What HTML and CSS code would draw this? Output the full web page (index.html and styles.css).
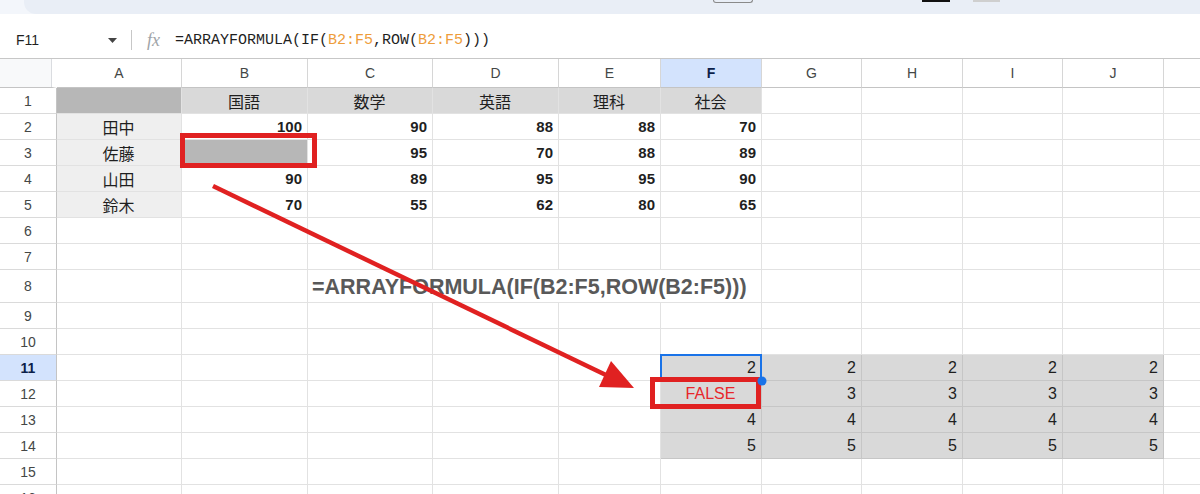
FILE: index.html
```html
<!DOCTYPE html>
<html lang="ja">
<head>
<meta charset="utf-8">
<title>ARRAYFORMULA</title>
<link rel="stylesheet" href="styles.css">
</head>
<body>
<div class="page">
  <div class="topband">
    <div class="pill">
      <div class="tb-outline"></div>
      <div class="tb-black"></div>
      <div class="tb-gray"></div>
    </div>
  </div>
  <div class="fbar">
    <div class="namebox">F11</div>
    <svg class="dd" width="9" height="5" viewBox="0 0 9 5"><path d="M0 0h9L4.5 5z" fill="#444"/></svg>
    <div class="fsep"></div>
    <div class="fx">fx</div>
    <div class="formula">=ARRAYFORMULA(IF(<span class="ref">B2:F5</span>,ROW(<span class="ref">B2:F5</span>)))</div>
  </div>

  <div class="sheet">
    <div class="row hdr">
      <div class="corner"></div>
      <div class="ch">A</div><div class="ch">B</div><div class="ch">C</div><div class="ch">D</div><div class="ch">E</div>
      <div class="ch on">F</div><div class="ch">G</div><div class="ch">H</div><div class="ch">I</div><div class="ch">J</div><div class="ch last"></div>
    </div>

    <div class="row">
      <div class="rh">1</div>
      <div class="c dk"></div>
      <div class="c lt jp">国語</div><div class="c lt jp">数学</div><div class="c lt jp">英語</div><div class="c lt jp">理科</div><div class="c lt jp">社会</div>
      <div class="c"></div><div class="c"></div><div class="c"></div><div class="c"></div><div class="c last"></div>
    </div>
    <div class="row">
      <div class="rh">2</div>
      <div class="c nm jp">田中</div>
      <div class="c n">100</div><div class="c n">90</div><div class="c n">88</div><div class="c n">88</div><div class="c n">70</div>
      <div class="c"></div><div class="c"></div><div class="c"></div><div class="c"></div><div class="c last"></div>
    </div>
    <div class="row">
      <div class="rh">3</div>
      <div class="c nm jp">佐藤</div>
      <div class="c dk"></div><div class="c n">95</div><div class="c n">70</div><div class="c n">88</div><div class="c n">89</div>
      <div class="c"></div><div class="c"></div><div class="c"></div><div class="c"></div><div class="c last"></div>
    </div>
    <div class="row">
      <div class="rh">4</div>
      <div class="c nm jp">山田</div>
      <div class="c n">90</div><div class="c n">89</div><div class="c n">95</div><div class="c n">95</div><div class="c n">90</div>
      <div class="c"></div><div class="c"></div><div class="c"></div><div class="c"></div><div class="c last"></div>
    </div>
    <div class="row">
      <div class="rh">5</div>
      <div class="c nm jp">鈴木</div>
      <div class="c n">70</div><div class="c n">55</div><div class="c n">62</div><div class="c n">80</div><div class="c n">65</div>
      <div class="c"></div><div class="c"></div><div class="c"></div><div class="c"></div><div class="c last"></div>
    </div>
    <div class="row">
      <div class="rh">6</div>
      <div class="c"></div><div class="c"></div><div class="c"></div><div class="c"></div><div class="c"></div><div class="c"></div>
      <div class="c"></div><div class="c"></div><div class="c"></div><div class="c"></div><div class="c last"></div>
    </div>
    <div class="row">
      <div class="rh">7</div>
      <div class="c"></div><div class="c"></div><div class="c"></div><div class="c"></div><div class="c"></div><div class="c"></div>
      <div class="c"></div><div class="c"></div><div class="c"></div><div class="c"></div><div class="c last"></div>
    </div>
    <div class="row tall">
      <div class="rh">8</div>
      <div class="c"></div><div class="c"></div>
      <div class="c big span4">=ARRAYFORMULA(IF(B2:F5,ROW(B2:F5)))</div>
      <div class="c"></div><div class="c"></div><div class="c"></div><div class="c"></div><div class="c last"></div>
    </div>
    <div class="row">
      <div class="rh">9</div>
      <div class="c"></div><div class="c"></div><div class="c"></div><div class="c"></div><div class="c"></div><div class="c"></div>
      <div class="c"></div><div class="c"></div><div class="c"></div><div class="c"></div><div class="c last"></div>
    </div>
    <div class="row">
      <div class="rh">10</div>
      <div class="c"></div><div class="c"></div><div class="c"></div><div class="c"></div><div class="c"></div><div class="c"></div>
      <div class="c"></div><div class="c"></div><div class="c"></div><div class="c"></div><div class="c last"></div>
    </div>
    <div class="row">
      <div class="rh on">11</div>
      <div class="c"></div><div class="c"></div><div class="c"></div><div class="c"></div><div class="c"></div>
      <div class="c r sel">2</div><div class="c r">2</div><div class="c r">2</div><div class="c r">2</div><div class="c r">2</div><div class="c last"></div>
    </div>
    <div class="row">
      <div class="rh">12</div>
      <div class="c"></div><div class="c"></div><div class="c"></div><div class="c"></div><div class="c"></div>
      <div class="c r false">FALSE</div><div class="c r">3</div><div class="c r">3</div><div class="c r">3</div><div class="c r">3</div><div class="c last"></div>
    </div>
    <div class="row">
      <div class="rh">13</div>
      <div class="c"></div><div class="c"></div><div class="c"></div><div class="c"></div><div class="c"></div>
      <div class="c r">4</div><div class="c r">4</div><div class="c r">4</div><div class="c r">4</div><div class="c r">4</div><div class="c last"></div>
    </div>
    <div class="row">
      <div class="rh">14</div>
      <div class="c"></div><div class="c"></div><div class="c"></div><div class="c"></div><div class="c"></div>
      <div class="c r">5</div><div class="c r">5</div><div class="c r">5</div><div class="c r">5</div><div class="c r">5</div><div class="c last"></div>
    </div>
    <div class="row">
      <div class="rh">15</div>
      <div class="c"></div><div class="c"></div><div class="c"></div><div class="c"></div><div class="c"></div><div class="c"></div>
      <div class="c"></div><div class="c"></div><div class="c"></div><div class="c"></div><div class="c last"></div>
    </div>
    <div class="row">
      <div class="rh">16</div>
      <div class="c"></div><div class="c"></div><div class="c"></div><div class="c"></div><div class="c"></div><div class="c"></div>
      <div class="c"></div><div class="c"></div><div class="c"></div><div class="c"></div><div class="c last"></div>
    </div>
  </div>

  <svg class="overlay" width="1200" height="494" viewBox="0 0 1200 494">
    <rect x="182.5" y="135.5" width="132" height="30" fill="none" stroke="#e02121" stroke-width="5"/>
    <rect x="652.5" y="379.5" width="106" height="27" fill="none" stroke="#e02121" stroke-width="5"/>
    <line x1="213" y1="186" x2="608" y2="376" stroke="#e02121" stroke-width="4.5"/>
    <polygon points="634,388 599,387 611,361" fill="#e02121"/>
    <circle cx="762" cy="381" r="4.5" fill="#1a73e8"/>
  </svg>
</div>
</body>
</html>
```

FILE: styles.css
```css
* { box-sizing: border-box; }

html, body {
  margin: 0;
  width: 1200px;
  height: 494px;
  overflow: hidden;
  background: #ffffff;
  font-family: "Liberation Sans", Arial, sans-serif;
  color: #1f1f1f;
}

.page {
  position: relative;
  width: 1200px;
  height: 494px;
  overflow: hidden;
}

/* top toolbar remnant */
.topband {
  height: 14px;
  background: #f3f6fb;
  padding-left: 24px;
  display: flex;
}
.pill {
  flex: 1;
  background: #e9eef6;
  border-bottom-left-radius: 12px;
  display: flex;
  align-items: flex-start;
}
.tb-outline {
  margin-left: 689px;
  width: 40px;
  height: 3px;
  border: 1px solid #8a8a8a;
  border-top: none;
  border-radius: 0 0 5px 5px;
}
.tb-black {
  margin-left: 169px;
  width: 28px;
  height: 2px;
  background: #111;
}
.tb-gray {
  margin-left: 23px;
  width: 27px;
  height: 2px;
  background: #cfcfcf;
}

/* formula bar */
.fbar {
  height: 44px;
  padding-top: 8px;
  display: flex;
  align-items: center;
}
.namebox {
  width: 108px;
  padding-left: 16px;
  font-size: 14px;
  color: #1f1f1f;
}
.dd { margin-right: 14px; }
.fsep {
  width: 1px;
  height: 20px;
  background: #c7c7c7;
  margin-right: 15px;
}
.fx {
  width: 17px;
  margin-right: 11px;
  font-family: "Liberation Serif", serif;
  font-style: italic;
  font-size: 18px;
  color: #a0a4a8;
  line-height: 1;
}
.formula {
  font-family: "Liberation Mono", "DejaVu Sans Mono", monospace;
  font-size: 15px;
  color: #1f1f1f;
}
.ref { color: #ee9d3a; }

/* sheet grid */
.row {
  display: grid;
  grid-template-columns: 57px 125px 126px 125px 126px 102px 101px 100px 101px 100px 101px 36px;
  height: 26px;
}
.row.hdr {
  height: 30px;
  border-top: 1px solid #c7c7c7;
}
.row.tall { height: 33px; }

.corner {
  background: #f8f9fa;
  border-right: 5px solid #ffffff;
  border-bottom: 1px solid #c4c4c4;
  box-shadow: inset -1px 0 0 #dadce0;
}
.ch {
  display: flex;
  align-items: center;
  justify-content: center;
  font-size: 14px;
  color: #444746;
  border-right: 1px solid #d6d6d6;
  border-bottom: 1px solid #c4c4c4;
}
.ch.on, .rh.on {
  background: #d3e3fd;
  color: #0b1f4a;
  font-weight: bold;
}
.ch.last, .c.last { border-right: none; }

.rh {
  display: flex;
  align-items: center;
  justify-content: center;
  font-size: 14px;
  color: #444746;
  border-right: 1px solid #c4c4c4;
  border-bottom: 1px solid #dadada;
}

.c {
  display: flex;
  align-items: center;
  padding: 0 5px 0 4px;
  font-size: 15px;
  color: #1f1f1f;
  white-space: nowrap;
  border-right: 1px solid #e2e2e2;
  border-bottom: 1px solid #e2e2e2;
}
.jp {
  font-family: "Liberation Sans", "Noto Sans CJK JP", sans-serif;
  font-size: 16px;
  justify-content: center;
}
.dk { background: #b7b7b7; }
.lt { background: #d9d9d9; }
.nm { background: #efefef; }
.n {
  justify-content: flex-end;
  font-weight: bold;
}
.big {
  grid-column: span 4;
  font-weight: bold;
  font-size: 21.5px;
  color: #595959;
  padding-top: 2px;
}
.r {
  justify-content: flex-end;
  font-size: 16px;
  background: #d9d9d9;
  border-right-color: #c6c6c6;
  border-bottom-color: #c6c6c6;
}
.false {
  justify-content: center;
  color: #e8262b;
}
.sel { position: relative; }
.sel::after {
  content: "";
  position: absolute;
  left: -1px;
  top: -1px;
  right: -1px;
  bottom: -1px;
  border: 2px solid #1a73e8;
}

.overlay {
  position: absolute;
  left: 0;
  top: 0;
  pointer-events: none;
}
```
